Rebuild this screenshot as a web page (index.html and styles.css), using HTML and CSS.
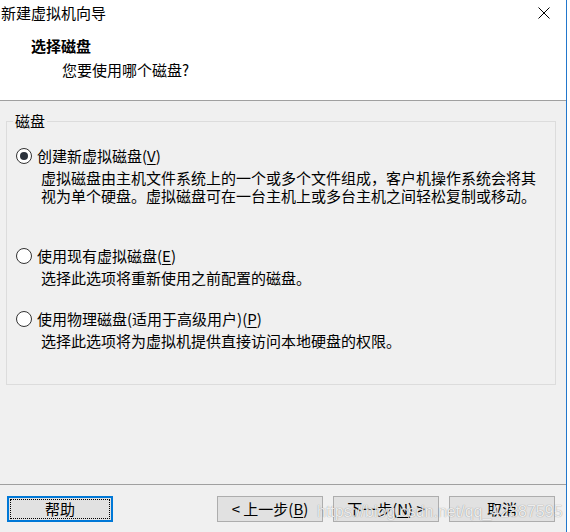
FILE: index.html
```html
<!DOCTYPE html>
<html lang="zh-CN">
<head>
<meta charset="utf-8">
<title>新建虚拟机向导</title>
<link rel="stylesheet" href="styles.css">
</head>
<body>
<div class="window">
  <div class="titlebar">
    <span class="title">新建虚拟机向导</span>
    <svg class="close" width="12" height="12" viewBox="0 0 12 12"><path d="M0.5 0.5 L11.5 11.5 M11.5 0.5 L0.5 11.5" stroke="#000" stroke-width="1" fill="none"/></svg>
  </div>
  <div class="header">
    <div class="heading">选择磁盘</div>
    <div class="subheading">您要使用哪个磁盘?</div>
  </div>
  <div class="content">
    <div class="group">
      <span class="legend">磁盘</span>
      <div class="option first">
        <div class="radio-row"><span class="radio checked"></span><span class="label">创建新虚拟磁盘(<u>V</u>)</span></div>
        <div class="desc">虚拟磁盘由主机文件系统上的一个或多个文件组成，客户机操作系统会将其<br>视为单个硬盘。虚拟磁盘可在一台主机上或多台主机之间轻松复制或移动。</div>
      </div>
      <div class="option second">
        <div class="radio-row"><span class="radio"></span><span class="label">使用现有虚拟磁盘(<u>E</u>)</span></div>
        <div class="desc">选择此选项将重新使用之前配置的磁盘。</div>
      </div>
      <div class="option third">
        <div class="radio-row"><span class="radio"></span><span class="label">使用物理磁盘(适用于高级用户)(<u>P</u>)</span></div>
        <div class="desc">选择此选项将为虚拟机提供直接访问本地硬盘的权限。</div>
      </div>
    </div>
  </div>
  <div class="footer">
    <button class="btn help"><span class="focus">帮助</span></button>
    <div class="spacer"></div>
    <div class="nav">
      <button class="btn">&lt; 上一步(<u>B</u>)</button>
      <button class="btn">下一步(<u>N</u>) &gt;</button>
      <button class="btn">取消</button>
    </div>
    <span class="watermark">https://blog.csdn.net/qq_42887595</span>
  </div>
</div>
</body>
</html>
```

FILE: styles.css
```css
html, body {
  margin: 0;
  padding: 0;
  background: #ffffff;
}
body {
  width: 570px;
  height: 532px;
  overflow: hidden;
  display: flex;
  font-family: "Noto Sans CJK SC", "Noto Sans", sans-serif;
  font-size: 15px;
  color: #000;
}
.window {
  width: 566px;
  height: 532px;
  border-right: 1px solid #2277cc;
  display: flex;
  flex-direction: column;
  background: #f0f0f0;
}
.titlebar {
  height: 27px;
  background: #fff;
  display: flex;
  align-items: center;
  justify-content: space-between;
  padding: 0 16px 2px 1px;
  box-sizing: border-box;
}
.title {
  line-height: 25px;
}
.header {
  background: #fff;
  height: 74px;
  box-sizing: border-box;
  border-bottom: 1px solid #a0a0a0;
  padding-top: 10px;
}
.heading {
  font-weight: 700;
  line-height: 18px;
  padding-left: 31px;
}
.subheading {
  line-height: 18px;
  margin-top: 6px;
  padding-left: 62px;
}
.content {
  flex: 1;
  padding: 20px 10px 0 6px;
}
.group {
  border: 1px solid #dcdcdc;
  display: flex;
  flex-direction: column;
  padding: 0 0 34px 9px;
  height: 264px;
  box-sizing: border-box;
}
.legend {
  align-self: flex-start;
  margin: -10px 0 0 -3px;
  padding: 0 2px;
  background: #f0f0f0;
  line-height: 18px;
}
.option.first { margin-top: 17px; }
.option.second { margin-top: 42px; }
.option.third { margin-top: 23px; }
.radio-row {
  display: flex;
  align-items: center;
  height: 18px;
}
.radio {
  width: 16px;
  height: 16px;
  box-sizing: border-box;
  border: 1px solid #333;
  border-radius: 50%;
  background: #fff;
  display: flex;
  align-items: center;
  justify-content: center;
  margin-right: 5px;
}
.radio.checked::after {
  content: "";
  width: 8px;
  height: 8px;
  border-radius: 50%;
  background: #2b323c;
}
.label {
  line-height: 18px;
}
u {
  text-underline-offset: 2px;
}
.desc {
  margin-top: 4px;
  padding-left: 25px;
  line-height: 18px;
}
.footer {
  position: relative;
  height: 48px;
  box-sizing: border-box;
  border-top: 1px solid #a0a0a0;
  display: flex;
  align-items: flex-start;
  padding: 11px 11px 0 7px;
}
.spacer { flex: 1; }
.nav {
  display: flex;
  gap: 10px;
}
.btn {
  width: 106px;
  height: 26px;
  box-sizing: border-box;
  background: #e1e1e1;
  border: 1px solid #adadad;
  font-family: inherit;
  font-size: 15px;
  color: #000;
  padding: 0;
  margin: 0;
  line-height: 22px;
}
.btn.help {
  border: 2px solid #0078d7;
  padding: 1px;
  display: flex;
}
.btn.help .focus {
  flex: 1;
  border: 1px dotted #000;
  line-height: 18px;
  display: flex;
  align-items: center;
  justify-content: center;
}
.watermark {
  position: absolute;
  left: 317px;
  top: 18px;
  font-family: "Liberation Sans", Arial, sans-serif;
  font-size: 16px;
  color: rgba(255, 255, 255, 0.85);
  text-shadow: 0 0 1px rgba(0, 0, 0, 0.45);
  pointer-events: none;
}
```
